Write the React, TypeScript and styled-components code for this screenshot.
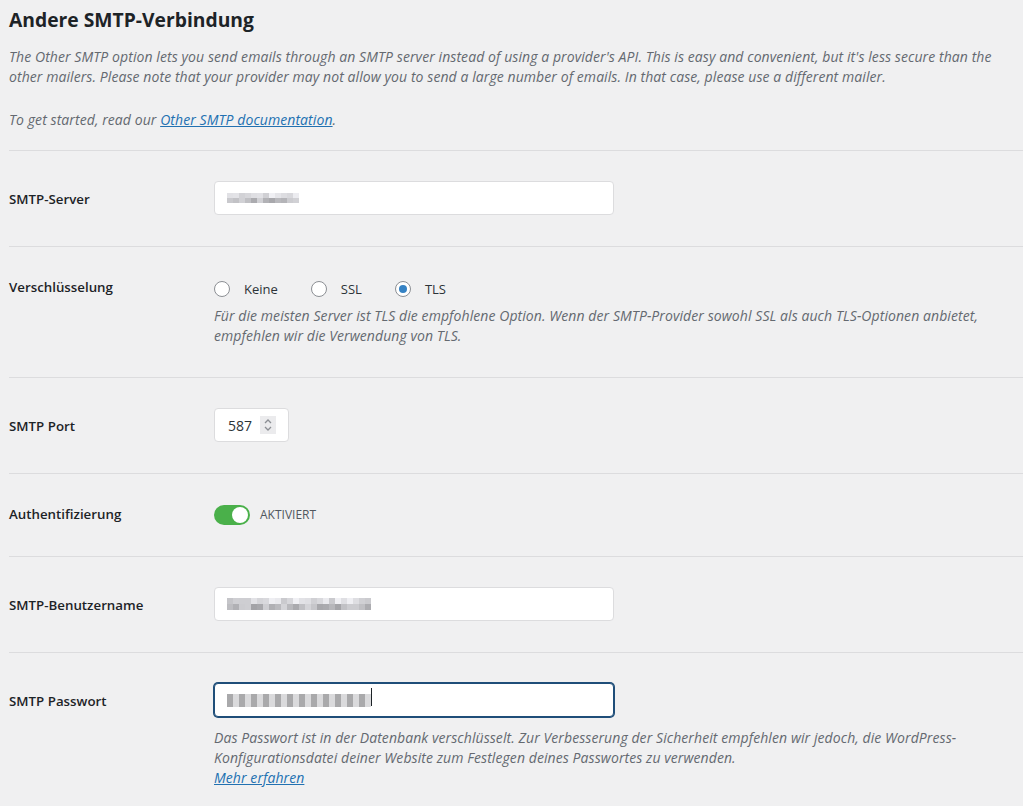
import React from "react";
import styled, { createGlobalStyle } from "styled-components";

const GlobalStyle = createGlobalStyle`
  html, body { margin: 0; padding: 0; background: #f0f0f1; }
  body {
    font-family: "Open Sans", "Segoe UI", "Noto Sans", sans-serif;
    color: #3c434a;
    font-size: 13px;
  }
`;

const Page = styled.div`
  padding: 6px 0 0 9px;
  overflow: hidden;
`;

const Title = styled.h2`
  margin: 0 0 13px;
  font-size: 19.3px;
  line-height: 28px;
  font-weight: 700;
  color: #1d2327;
`;

const Intro = styled.p<{ $mb: number }>`
  margin: 0 0 ${(p) => p.$mb}px;
  font-style: italic;
  font-size: 14px;
  letter-spacing: 0.08px;
  line-height: 20px;
  color: #646970;
  white-space: nowrap;
`;

const Link = styled.a`
  color: #2271b1;
  text-decoration: underline;
`;

const Row = styled.div`
  display: grid;
  grid-template-columns: 205px 1fr;
  border-top: 1px solid #dcdcde;
  padding: 30px 0 31px;
`;

const Label = styled.div<{ $pt: number }>`
  padding-top: ${(p) => p.$pt}px;
  font-size: 13.3px;
  line-height: 20px;
  font-weight: 600;
  color: #1d2327;
`;

const Field = styled.div`
  display: flex;
  flex-direction: column;
  align-items: flex-start;
`;

const TextBox = styled.div<{ $w: number; $focus?: boolean }>`
  box-sizing: border-box;
  width: ${(p) => p.$w}px;
  height: 34px;
  background: #fff;
  border: 1px solid ${(p) => (p.$focus ? "#1f4e79" : "#dcdcde")};
  box-shadow: ${(p) => (p.$focus ? "0 0 0 1px #1f4e79" : "none")};
  border-radius: 4px;
  display: flex;
  align-items: center;
  padding: 0 12px;
  font-size: 14px;
  color: #2c3338;
`;

const Mosaic = styled.div`
  display: flex;
  flex-direction: column;
`;

const MosaicRow = styled.div`
  display: flex;
`;

const Cell = styled.span<{ $h: number }>`
  display: block;
  width: 6px;
  height: ${(p) => p.$h}px;
`;

const Caret = styled.span`
  display: block;
  width: 1px;
  height: 18px;
  margin-top: -6px;
  background: #1d2327;
`;

const RadioLine = styled.div`
  display: flex;
  align-items: center;
  height: 24px;
  gap: 33px;
`;

const RadioItem = styled.label`
  display: flex;
  align-items: center;
  gap: 14px;
  font-size: 13px;
  color: #2c3338;
`;

const RadioCircle = styled.span<{ $checked?: boolean }>`
  box-sizing: border-box;
  width: 16px;
  height: 16px;
  border-radius: 50%;
  border: 1px solid #8c8f94;
  background: #fff;
  display: flex;
  align-items: center;
  justify-content: center;
  &::after {
    content: "";
    width: 8px;
    height: 8px;
    border-radius: 50%;
    background: ${(p) => (p.$checked ? "#3582c4" : "transparent")};
  }
`;

const Desc = styled.p<{ $mt: number }>`
  margin: ${(p) => p.$mt}px 0 0;
  font-style: italic;
  font-size: 14px;
  letter-spacing: 0.08px;
  line-height: 20px;
  color: #646970;
  white-space: nowrap;
`;

const PortBox = styled.div`
  box-sizing: border-box;
  width: 75px;
  height: 34px;
  background: #fff;
  border: 1px solid #dcdcde;
  border-radius: 4px;
  display: flex;
  align-items: center;
  padding: 0 0 0 13px;
  font-size: 14px;
  color: #2c3338;
  gap: 8px;
`;

const Spinner = styled.span`
  width: 16px;
  height: 18px;
  background: #ebebed;
  display: flex;
  align-items: center;
  justify-content: center;
`;

const ToggleLine = styled.div`
  display: flex;
  align-items: center;
  height: 21px;
  gap: 10px;
`;

const Toggle = styled.span`
  box-sizing: border-box;
  width: 36px;
  height: 20px;
  border-radius: 10px;
  background: #4ab04a;
  display: flex;
  align-items: center;
  justify-content: flex-end;
  padding: 0 2px;
  &::after {
    content: "";
    width: 16px;
    height: 16px;
    border-radius: 50%;
    background: #fff;
  }
`;

const ToggleText = styled.span`
  font-size: 12px;
  color: #50575e;
  text-transform: uppercase;
`;

function shades(seed: number, n: number, lo: number, hi: number): string[] {
  const out: string[] = [];
  let s = seed;
  for (let i = 0; i < n; i++) {
    s = (s * 9301 + 49297) % 233280;
    const v = Math.round(lo + (s / 233280) * (hi - lo));
    out.push(`rgb(${v},${v},${v + 4})`);
  }
  return out;
}

const Pixels: React.FC<{ rows: string[][]; h: number }> = ({ rows, h }) => (
  <Mosaic>
    {rows.map((r, i) => (
      <MosaicRow key={i}>
        {r.map((c, j) => (
          <Cell key={j} $h={h} style={{ background: c }} />
        ))}
      </MosaicRow>
    ))}
  </Mosaic>
);

const serverRows = [shades(7, 12, 205, 245), shades(13, 12, 165, 215)];
const userRows = [shades(21, 24, 195, 240), shades(33, 24, 160, 215)];
const passRows = [
  Array.from({ length: 24 }, (_, i) => (i % 2 === 0 ? "#a9a9ab" : "#dadadc")),
];

const Chevrons = () => (
  <svg width="10" height="14" viewBox="0 0 10 14" fill="none" stroke="#8c8f94" strokeWidth="1.3">
    <path d="M2 5 L5 2 L8 5" />
    <path d="M2 9 L5 12 L8 9" />
  </svg>
);

export default function App() {
  return (
    <>
      <GlobalStyle />
      <Page>
        <Title>Andere SMTP-Verbindung</Title>
        <Intro $mb={23}>
          The Other SMTP option lets you send emails through an SMTP server instead of using a provider's API. This is easy and convenient, but it's less secure than the
          <br />
          other mailers. Please note that your provider may not allow you to send a large number of emails. In that case, please use a different mailer.
        </Intro>
        <Intro $mb={20}>
          To get started, read our <Link href="#">Other SMTP documentation</Link>.
        </Intro>

        <Row>
          <Label $pt={8}>SMTP-Server</Label>
          <Field>
            <TextBox $w={400}>
              <Pixels rows={serverRows} h={5} />
            </TextBox>
          </Field>
        </Row>

        <Row>
          <Label $pt={0}>Verschlüsselung</Label>
          <Field>
            <RadioLine>
              <RadioItem>
                <RadioCircle />
                Keine
              </RadioItem>
              <RadioItem>
                <RadioCircle />
                SSL
              </RadioItem>
              <RadioItem>
                <RadioCircle $checked />
                TLS
              </RadioItem>
            </RadioLine>
            <Desc $mt={5}>
              Für die meisten Server ist TLS die empfohlene Option. Wenn der SMTP-Provider sowohl SSL als auch TLS-Optionen anbietet,
              <br />
              empfehlen wir die Verwendung von TLS.
            </Desc>
          </Field>
        </Row>

        <Row>
          <Label $pt={8}>SMTP Port</Label>
          <Field>
            <PortBox>
              587
              <Spinner>
                <Chevrons />
              </Spinner>
            </PortBox>
          </Field>
        </Row>

        <Row>
          <Label $pt={0}>Authentifizierung</Label>
          <Field>
            <ToggleLine>
              <Toggle />
              <ToggleText>Aktiviert</ToggleText>
            </ToggleLine>
          </Field>
        </Row>

        <Row>
          <Label $pt={8}>SMTP-Benutzername</Label>
          <Field>
            <TextBox $w={400}>
              <Pixels rows={userRows} h={6} />
            </TextBox>
          </Field>
        </Row>

        <Row>
          <Label $pt={8}>SMTP Passwort</Label>
          <Field>
            <TextBox $w={400} $focus>
              <Pixels rows={passRows} h={13} />
              <Caret />
            </TextBox>
            <Desc $mt={11}>
              Das Passwort ist in der Datenbank verschlüsselt. Zur Verbesserung der Sicherheit empfehlen wir jedoch, die WordPress-
              <br />
              Konfigurationsdatei deiner Website zum Festlegen deines Passwortes zu verwenden.
              <br />
              <Link href="#">Mehr erfahren</Link>
            </Desc>
          </Field>
        </Row>
      </Page>
    </>
  );
}
